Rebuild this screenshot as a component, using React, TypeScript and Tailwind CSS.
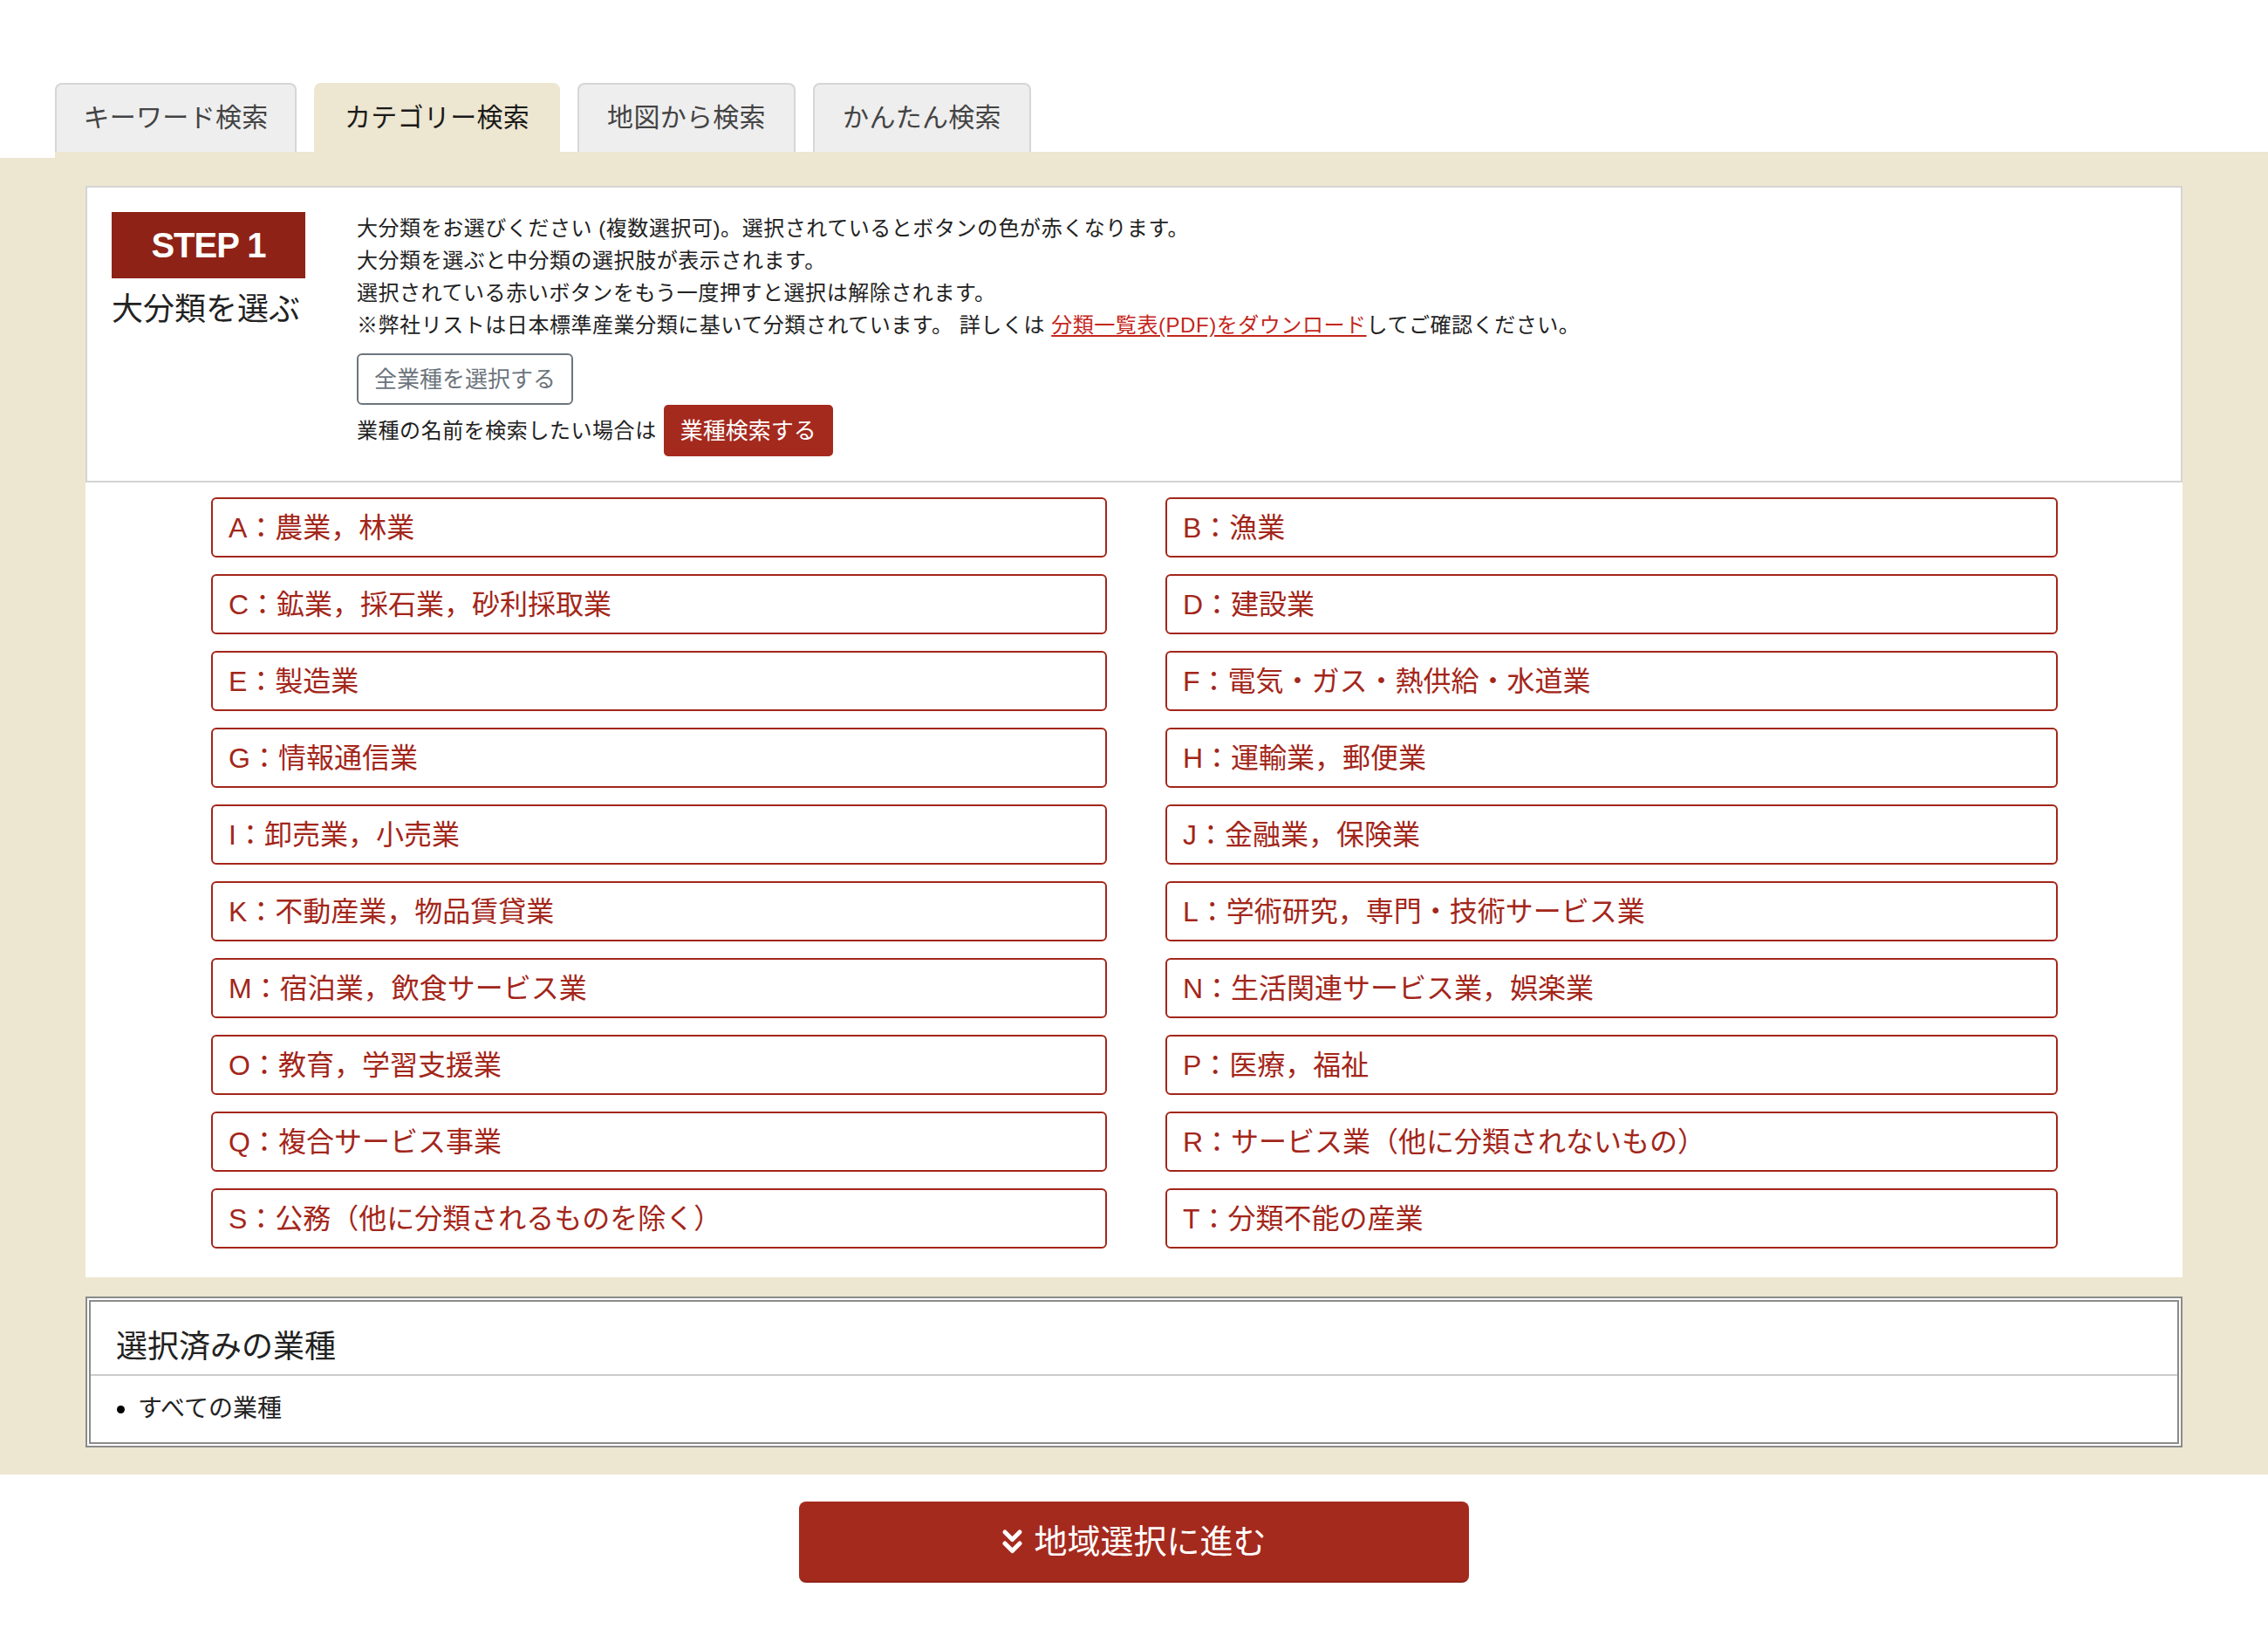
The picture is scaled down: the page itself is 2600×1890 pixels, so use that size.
import React from "react";

const tabs = [
  { label: "キーワード検索", active: false, width: "w-[277px]" },
  { label: "カテゴリー検索", active: true, width: "w-[282px]" },
  { label: "地図から検索", active: false, width: "w-[250px]" },
  { label: "かんたん検索", active: false, width: "w-[250px]" },
];

const categories = [
  "A：農業，林業",
  "B：漁業",
  "C：鉱業，採石業，砂利採取業",
  "D：建設業",
  "E：製造業",
  "F：電気・ガス・熱供給・水道業",
  "G：情報通信業",
  "H：運輸業，郵便業",
  "I：卸売業，小売業",
  "J：金融業，保険業",
  "K：不動産業，物品賃貸業",
  "L：学術研究，専門・技術サービス業",
  "M：宿泊業，飲食サービス業",
  "N：生活関連サービス業，娯楽業",
  "O：教育，学習支援業",
  "P：医療，福祉",
  "Q：複合サービス事業",
  "R：サービス業（他に分類されないもの）",
  "S：公務（他に分類されるものを除く）",
  "T：分類不能の産業",
];

function DoubleChevron() {
  return (
    <svg width="25" height="30" viewBox="0 0 25 30" fill="none" className="shrink-0">
      <path d="M4 4 L12.5 12.5 L21 4" stroke="white" strokeWidth="5" strokeLinecap="round" strokeLinejoin="round" />
      <path d="M4 17 L12.5 25.5 L21 17" stroke="white" strokeWidth="5" strokeLinecap="round" strokeLinejoin="round" />
    </svg>
  );
}

export default function App() {
  return (
    <div className="min-h-[1890px] w-full bg-white font-['Liberation_Sans','Noto_Sans_CJK_JP',sans-serif] text-[#222]">
      {/* Tabs */}
      <div className="flex items-end gap-[20px] pl-[63px] pt-[95px]">
        {tabs.map((t) => (
          <div
            key={t.label}
            className={
              t.active
                ? `${t.width} h-[79px] rounded-t-[8px] bg-[#ede6d0] pt-[25px] text-center text-[30px] leading-[30px] tracking-[0.3px] text-[#1a1a1a]`
                : `${t.width} h-[79px] rounded-t-[8px] border-2 border-b-0 border-[#d6d6d6] bg-[#eeeeee] pt-[23px] text-center text-[30px] leading-[30px] tracking-[0.3px] text-[#444]`
            }
          >
            {t.label}
          </div>
        ))}
      </div>
      <div className="ml-[63px] h-[7px] bg-[#ede6d0]" />

      {/* Beige body */}
      <div className="bg-[#ede6d0] px-[98px] pt-[32px] pb-[31px]">
        {/* Step header */}
        <div className="flex gap-[59px] border-2 border-[#d4d4d4] bg-white px-[28px] pt-[28px] pb-[28px]">
          <div className="w-[222px] shrink-0">
            <div className="flex h-[76px] items-center justify-center bg-[#8e2216] text-[40px] font-bold tracking-[-1px] text-white">
              STEP 1
            </div>
            <div className="mt-[16px] text-[36px] leading-[40px] whitespace-nowrap">大分類を選ぶ</div>
          </div>
          <div className="text-[24px] leading-[37px] tracking-[0.55px]">
            <p>大分類をお選びください (複数選択可)。選択されているとボタンの色が赤くなります。</p>
            <p>大分類を選ぶと中分類の選択肢が表示されます。</p>
            <p>選択されている赤いボタンをもう一度押すと選択は解除されます。</p>
            <p>
              ※弊社リストは日本標準産業分類に基いて分類されています。 詳しくは{" "}
              <a className="text-[#c4261c] underline underline-offset-[3px]">分類一覧表(PDF)をダウンロード</a>
              してご確認ください。
            </p>
            <button className="mt-[14px] flex h-[59px] items-center rounded-[6px] border-2 border-[#6c757d] bg-white px-[18px] text-[26px] leading-none tracking-normal text-[#6c757d]">
              全業種を選択する
            </button>
            <div className="flex items-center gap-[8px]">
              <span>業種の名前を検索したい場合は</span>
              <button className="flex h-[59px] items-center rounded-[5px] bg-[#a52a1e] px-[19px] text-[26px] leading-none tracking-normal text-white">
                業種検索する
              </button>
            </div>
          </div>
        </div>

        {/* Category grid */}
        <div className="grid grid-cols-[1027px_1023px] gap-x-[67px] gap-y-[19px] bg-white pt-[17px] pb-[33px] pl-[144px]">
          {categories.map((c) => (
            <button
              key={c}
              className="flex h-[69px] items-center rounded-[6px] border-2 border-[#a3261a] bg-white px-[18px] text-left text-[32px] leading-none text-[#a3261a]"
            >
              {c}
            </button>
          ))}
        </div>

        {/* Selected */}
        <div className="mt-[22px] border-[6px] border-double border-[#8a8a8a] bg-white">
          <div className="border-b-2 border-[#cccccc] px-[29px] pt-[32px] pb-[11px] text-[36px] leading-[40px]">
            選択済みの業種
          </div>
          <div className="flex h-[76px] items-center px-[30px] text-[28px] leading-none">
            <span className="mr-[15px] h-[9px] w-[9px] rounded-full bg-black" />
            すべての業種
          </div>
        </div>
      </div>

      {/* Next button */}
      <div className="flex justify-center pt-[31px]">
        <button className="flex h-[93px] w-[768px] items-center justify-center gap-[12px] rounded-[8px] border-b-2 border-[#8e2216] bg-[#a52a1e] text-[38px] leading-none text-white">
          <DoubleChevron />
          地域選択に進む
        </button>
      </div>
    </div>
  );
}
